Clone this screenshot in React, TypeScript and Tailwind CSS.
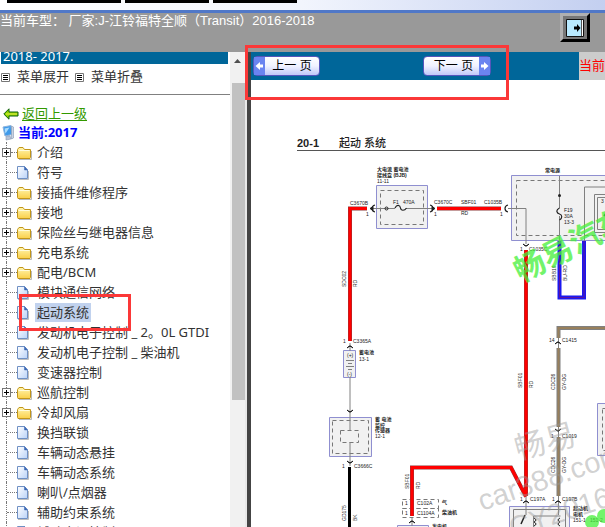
import React from 'react';

type Kind = 'folder' | 'page';
type Entry = { label: string; kind: Kind; selected?: boolean };

const entries: Entry[] = [
  { label: '介绍', kind: 'folder' },
  { label: '符号', kind: 'page' },
  { label: '接插件维修程序', kind: 'folder' },
  { label: '接地', kind: 'folder' },
  { label: '保险丝与继电器信息', kind: 'folder' },
  { label: '充电系统', kind: 'folder' },
  { label: '配电/BCM', kind: 'folder' },
  { label: '模块通信网络', kind: 'page' },
  { label: '起动系统', kind: 'page', selected: true },
  { label: '发动机电子控制 _ 2。0L GTDI', kind: 'page' },
  { label: '发动机电子控制 _ 柴油机', kind: 'page' },
  { label: '变速器控制', kind: 'page' },
  { label: '巡航控制', kind: 'folder' },
  { label: '冷却风扇', kind: 'folder' },
  { label: '换挡联锁', kind: 'page' },
  { label: '车辆动态悬挂', kind: 'page' },
  { label: '车辆动态系统', kind: 'page' },
  { label: '喇叭/点烟器', kind: 'page' },
  { label: '辅助约束系统', kind: 'page' },
  { label: '辅助空调控制', kind: 'page' },
];

function FolderIcon() {
  return (
    <svg width="16" height="16" viewBox="0 0 16 16" aria-hidden="true">
      <defs>
        <linearGradient id="folder" x1="0" y1="0" x2="0" y2="1">
          <stop offset="0" stopColor="#fff6b0" />
          <stop offset="1" stopColor="#fbd04a" />
        </linearGradient>
      </defs>
      <path d="M2 14.500h12.500V6" fill="none" stroke="#b9b9b9" />
      <path d="M.5 12.500v-8l1.500-2h4l1.500 2h6v8l-.5 1h-12z" fill="url(#folder)" stroke="#c2961a" />
      <path d="M1.500 5.500h11" stroke="#fffbdc" />
    </svg>
  );
}

function PageIcon() {
  return (
    <svg width="16" height="16" viewBox="0 0 16 16" aria-hidden="true">
      <defs>
        <linearGradient id="page" x1="0" y1="0" x2="1" y2="1">
          <stop offset="0" stopColor="#ffffff" />
          <stop offset="1" stopColor="#b9d2f8" />
        </linearGradient>
      </defs>
      <path d="M1 14.500h10.500V6" fill="none" stroke="#bdbdbd" />
      <path d="M.5 1.500h7l3 3.500v8.500H.5z" fill="url(#page)" stroke="#6f90c4" />
      <path d="M7.500 1.500V5h3z" fill="#3c68b4" stroke="#3c68b4" strokeWidth=".5" />
    </svg>
  );
}

function ListIcon() {
  return (
    <svg width="9" height="9" viewBox="0 0 9 9" aria-hidden="true">
      <path d="M.5.5h8v8h-8z" fill="#fff" stroke="#777" />
      <path d="M2 2.500h5M2 4.500h5M2 6.500h5" stroke="#000" />
    </svg>
  );
}

function BackArrow() {
  return (
    <svg width="16" height="12" viewBox="0 0 16 12" aria-hidden="true">
      <path d="M.8 6 6 .8V4h9v4H6v3.200z" fill="#8fd400" stroke="#0d5f10" />
      <path d="M3 6h11" stroke="#e9f04a" />
    </svg>
  );
}

function ComputerIcon() {
  return (
    <svg width="13" height="16" viewBox="0 0 13 16" aria-hidden="true">
      <path d="M1 2l8-1.500 1 9L3 11z" fill="#3f9aea" stroke="#8fb4dc" />
      <path d="M2.500 3.500l5-1-4 6z" fill="#a9dcff" />
      <path d="M9.500 1l2 1v11l-2 1z" fill="#c9d3e2" stroke="#8797b3" strokeWidth=".6" />
      <path d="M4 11.500l4-.7 1 3.200-5 1z" fill="#b8c3d6" stroke="#8797b3" strokeWidth=".6" />
    </svg>
  );
}

function TreeRow({ entry }: { entry: Entry }) {
  return (
    <li className="flex h-5 shrink-0 items-center">
      <div className="grid h-5 w-[17px] shrink-0 grid-cols-[6px_1fr] items-stretch">
        <span />
        <span className="flex items-center border-l border-dotted border-[#777]">
          {entry.kind === 'folder' ? (
            <button
              aria-label={'展开 ' + entry.label}
              className="-ml-[5px] flex size-[9px] shrink-0 items-center justify-center border border-[#777] bg-white"
            >
              <svg width="5" height="5" viewBox="0 0 5 5" aria-hidden="true">
                <path d="M0 2.500h5M2.500 0v5" stroke="#000" />
              </svg>
            </button>
          ) : null}
          <span className="h-px grow border-t border-dotted border-[#777]" />
        </span>
      </div>
      <span className="flex w-[18px] shrink-0 pt-px">
        {entry.kind === 'folder' ? <FolderIcon /> : <PageIcon />}
      </span>
      <a
        href="#page"
        className={
          entry.selected
            ? 'bg-[#c1d2ee] px-0.5 leading-[19px] whitespace-nowrap'
            : 'px-0.5 leading-[19px] whitespace-nowrap'
        }
      >
        {entry.label}
      </a>
    </li>
  );
}

function Sidebar() {
  return (
    <aside className="flex w-[245px] shrink-0 overflow-hidden bg-white">
      <nav className="min-w-0 flex-1 overflow-hidden font-['Noto_Sans','Noto_Sans_CJK_SC',sans-serif] text-[13px] text-[#333]">
        <div className="mr-0.5 ml-px flex h-3 items-end overflow-hidden bg-[#006699] pl-0.5 leading-4 text-white">
          2018- 2017.
        </div>
        <div className="flex h-[31px] items-center border-b border-[#808080] pb-1 pl-px">
          <button className="flex items-center gap-[7px]">
            <ListIcon />
            菜单展开
          </button>
          <button className="ml-1.5 flex items-center gap-[7px]">
            <ListIcon />
            菜单折叠
          </button>
        </div>
        <a href="#up" className="mt-[9px] flex h-5 items-center gap-[3px] pl-[3px] text-[#339900]">
          <BackArrow />
          <span className="underline underline-offset-2">返回上一级</span>
        </a>
        <div className="flex h-[18px] items-center gap-[3px] pl-0.5 font-bold text-[#0000ff]">
          <ComputerIcon />
          <span>当前:2017</span>
        </div>
        <ul>
          {entries.map((e) => (
            <TreeRow key={e.label} entry={e} />
          ))}
        </ul>
      </nav>
      <div className="flex w-[15px] shrink-0 flex-col items-end bg-[#f1f1f1]" aria-hidden="true">
        <div className="flex h-[31px] w-[15px] items-start justify-center pt-[7px]">
          <svg width="7" height="4" viewBox="0 0 7 4">
            <path d="M0 4 3.500 0 7 4z" fill="#505050" />
          </svg>
        </div>
        <div className="h-[317px] w-[13px] bg-[#c1c1c1]" />
      </div>
    </aside>
  );
}

function PageArrow({ flip }: { flip?: boolean }) {
  return (
    <svg width="11" height="18" viewBox="0 0 11 18" className="shrink-0 bg-[#6a84f0]" aria-hidden="true">
      <path
        d={flip ? 'M2 7.500h3V5l4.500 4L5 13v-2.500H2z' : 'M9 7.500H6V5L1.500 9 6 13v-2.500h3z'}
        fill="#fff"
      />
    </svg>
  );
}

const wireTexts: [number, number, string][] = [
  [377, 183, '11-11'],
  [350, 205, 'C3670B'],
  [366, 216, '1'],
  [393, 204, 'F1'],
  [403, 204, '470A'],
  [434, 204, 'C3670C'],
  [434, 216, '1'],
  [461, 204, 'SBF01'],
  [461, 215, 'RD'],
  [484, 204, 'C1035B'],
  [500, 216, '1'],
  [564, 212, 'F19'],
  [564, 218, '30A'],
  [564, 224, '13-3'],
  [601, 203, '3'],
  [520, 251, '1'],
  [529, 251, 'C1035C'],
  [343, 343, '1'],
  [353, 343, 'C3365A'],
  [359, 361, '13-1'],
  [375, 438, '12-1'],
  [342, 468, '1'],
  [354, 468, 'C3666C'],
  [405, 505, '1'],
  [417, 505, 'C102A'],
  [405, 515, '1'],
  [417, 515, 'C1104A'],
  [549, 342, '14'],
  [562, 342, 'C1415'],
  [551, 438, '1'],
  [562, 438, 'C1019'],
  [520, 501, '1'],
  [530, 501, 'C197A'],
  [552, 501, '1'],
  [562, 501, 'C197B'],
  [573, 522, '151-1'],
  [590, 522, '151-2'],
];

const boldTexts: [number, number, string][] = [
  [377, 171, '大电流 蓄电池'],
  [377, 177, '接线盒 (BJB)'],
  [545, 172, '常电源'],
  [359, 354, '蓄电池'],
  [375, 421, '蓄 电池'],
  [375, 427, '监控'],
  [375, 432, '传感器'],
  [442, 504, '气'],
  [442, 514, '柴油机'],
  [432, 528, '发电机'],
  [573, 510, '起动机'],
  [573, 516, '电机'],
];

const verticalTexts: [number, number, string][] = [
  [346, 287, 'SDC02'],
  [357, 287, 'RD'],
  [556, 281, 'SBB19'],
  [567, 281, 'BU-RD'],
  [522, 388, 'SBF01'],
  [533, 388, 'RD'],
  [555, 390, 'CDC26'],
  [566, 390, 'GY-OG'],
  [555, 473, 'CDC26'],
  [566, 473, 'GY-OG'],
  [409, 489, 'SBF01'],
  [420, 489, 'RD'],
  [346, 521, 'GD175'],
  [357, 521, 'BK'],
];

const connectorsUp: [number, number][] = [
  [350, 346],
  [412, 521],
  [526, 501],
  [558, 342],
  [558, 501],
];
const connectorsDown: [number, number][] = [
  [350, 412],
  [350, 463],
  [526, 246],
  [558, 431],
];

function Wiring() {
  return (
    <svg
      viewBox="251 151 354 376"
      className="block w-full font-['Liberation_Sans','Noto_Sans_CJK_SC',sans-serif]"
      role="img"
      aria-label="起动 系统"
    >
      <g fill="#f1f1f1" stroke="#8f8fd0">
        <path d="M376.500 185.500h51v43h-51zM511.500 175.500h110v65h-110zM343.500 350.500h12v27h-12zM329.500 417.500h42v39h-42zM597.500 403.500h20v52h-20zM509.500 506.500h60v30h-60zM397.500 525.500h31v10h-31z" />
      </g>
      <g fill="none" stroke="#777" strokeDasharray="4 3">
        <path d="M380.500 190.500h43v34h-43zM516.500 180.500h110v55h-110zM332.500 420.500h36v33h-36zM340.500 430.500h18v12h-18zM602.500 408.500h20v42h-20zM402.500 499.500h36v9h-36zM402.500 508.500h36v9h-36z" />
      </g>
      <g fill="none" stroke="#808080">
        <path d="M370 208.500h25M406 208.500h28M508 208.500h18V244M559.500 176v32M559.500 216v25M584.500 241v-54H620M594.500 194.500h20v38h-20zM597.500 197.500h20v32h-20z" />
        <path d="M350 343v8M350 377v54M350 442v24M412 518v8M526 496v19M558.500 338v10M558.500 427v10M558.500 496v19M513.500 530v-20.500h52V530M533.500 527v-11h27M346 360.500h8M348 363.500h4M346 366.500h8M348 369.500h4" />
      </g>
      <g fill="none" stroke="#222">
        <circle cx="386.500" cy="208.500" r="1.500" />
        <path d="M395 208c2-4 5-3 5.500 0s4 3 6 0M559.500 208c-4 2-3 5 0 6s3 4 0 6M375 205c-4 1-4 6 0 7M430 205c4 1 4 6 0 7M508 205c-4 1-4 6 0 7" strokeWidth="1.200" />
        <path d="M370 208.500l3-2v4zM432 206.500l3 2-3 2z" fill="#222" />
        <path d="M525 515l-4 9M604 216l4-6" strokeWidth="1.500" />
        <path d="M534 518q4 2 0 4q4 2 0 4M560 518q-4 2 0 4q-4 2 0 4" />
      </g>
      <circle cx="559.500" cy="195.500" r="1.500" fill="#222" />
      <g fill="none">
        <path d="M367 208.500H350V341M437 208.500h64M526 250v246M412 516v-48.500h99l15 29" stroke="#8c3a3a" strokeWidth="4" />
        <path d="M367 208.500H350V341M437 208.500h64M526 250v246M412 516v-48.500h99l15 29" stroke="#ff0000" strokeWidth="3" />
        <path d="M559.500 241v56.500h24.500V241" stroke="#1b18f0" strokeWidth="4" />
        <path d="M559.500 241v56.500h24.500V241" stroke="#5a14a0" strokeWidth="1" />
        <path d="M620 328H558.500v10M558.500 348v79M558.500 437v59" stroke="#808080" strokeWidth="4" />
        <path d="M620 328H558.500v10M558.500 348v79M558.500 437v59" stroke="#98805c" strokeWidth="2" />
        <path d="M349.500 467v60" stroke="#000" strokeWidth="3" />
      </g>
      <g stroke="#222" fill="#222">
        {connectorsUp.map(([x, y]) => (
          <path key={x + '-' + y} d={`M${x - 3} ${y + 2}q3-4 6 0l-3-2z`} />
        ))}
        {connectorsDown.map(([x, y]) => (
          <path key={x + '-' + y} d={`M${x - 3} ${y - 2}q3 4 6 0l-3 2z`} />
        ))}
      </g>
      <g fill="#222" fontSize="5">
        {wireTexts.map(([x, y, t]) => (
          <text key={x + '-' + y} x={x} y={y}>
            {t}
          </text>
        ))}
        <text x="347" y="357">(+)</text>
        <text x="347" y="376">(-)</text>
        <g fontWeight="bold">
          {boldTexts.map(([x, y, t]) => (
            <text key={x + '-' + y} x={x} y={y}>
              {t}
            </text>
          ))}
        </g>
        {verticalTexts.map(([x, y, t]) => (
          <text key={x + '-' + y} transform={`translate(${x} ${y}) rotate(-90)`}>
            {t}
          </text>
        ))}
      </g>
      <g fill="#45ef3a" fillOpacity=".75" fontWeight="bold">
        <text transform="translate(521 283) rotate(-27)" fontSize="31">
          畅易汽车
        </text>
        <circle cx="592" cy="522" r="7" />
        <circle cx="604" cy="516" r="7" />
      </g>
      <g fill="#999" fillOpacity=".45">
        <text transform="translate(518 460) rotate(-15)" fontSize="31">
          畅易
        </text>
        <text transform="translate(482 511) rotate(-19)" fontSize="29">
          car388.com
        </text>
        <text transform="translate(513 538) rotate(-18)" fontSize="29">
          CY2016
        </text>
      </g>
    </svg>
  );
}

function Viewer() {
  return (
    <main className="min-w-0 flex-1 overflow-hidden bg-white">
      <div className="flex h-7 items-stretch bg-[#006699] font-['Liberation_Sans','Noto_Sans_CJK_SC',sans-serif] text-[13px]">
        <div className="flex flex-1 items-center pl-0.5">
          <button className="flex h-5 w-[67px] items-center rounded-sm border border-[#5555bb] bg-linear-to-b from-white via-[#f0f2ff] to-[#c0c8f8] text-[12px] text-black">
            <PageArrow />
            <span className="flex-1 whitespace-nowrap">上一 页</span>
          </button>
          <button className="ml-[103px] flex h-5 w-[68px] items-center rounded-sm border border-[#5555bb] bg-linear-to-b from-white via-[#f0f2ff] to-[#c0c8f8] text-[12px] text-black">
            <span className="flex-1 pl-1 whitespace-nowrap">下一 页</span>
            <PageArrow flip />
          </button>
        </div>
        <div className="flex w-[26px] items-center overflow-hidden bg-[#cccccc] whitespace-nowrap text-[#ff0000]">
          当前
        </div>
      </div>
      <h1 className="mt-[55px] ml-[46px] flex h-4 items-center gap-5 border-b border-[#555] font-['Liberation_Sans','Noto_Sans_CJK_SC',sans-serif] text-[11px] leading-4 font-bold whitespace-nowrap text-[#222]">
        <span>20-1</span>
        <span className="font-medium">起动 系统</span>
      </h1>
      <Wiring />
    </main>
  );
}

export default function App() {
  return (
    <div className="relative flex h-screen flex-col overflow-hidden bg-white">
      <div className="flex h-[13px] shrink-0 items-start gap-1 border-b-3 border-[#5078c8] bg-linear-to-r from-white via-[#f2f5fd] to-[#c3cff0] pl-[7px]">
        <span className="h-[3px] w-[114px] bg-black" />
        <span className="h-[3px] w-[84px] bg-black" />
        <span className="h-[3px] w-[84px] bg-black" />
      </div>
      <header className="flex h-[39px] shrink-0 items-start justify-between bg-[#999999] pr-[15px] font-['Liberation_Sans','Noto_Sans_CJK_SC',sans-serif] text-[13px] leading-4 whitespace-nowrap text-white">
        <p>当前车型： 厂家:J-江铃福特全顺（Transit）2016-2018</p>
        <button
          aria-label="退出"
          className="flex h-[29px] w-[30px] items-center justify-center border-3 border-t-[#b0b0b0] border-r-black border-b-black border-l-[#b0b0b0] bg-[#777]"
        >
          <svg width="18" height="18" viewBox="0 0 18 18" aria-hidden="true">
            <path d="M.5.5h17v17H.5z" fill="#b9eaff" stroke="#111" />
            <path d="M16.500 1v16" stroke="#fff" />
            <path d="M15.500 1v16" stroke="#555" />
            <path d="M8 7.500h3V5l3.500 4L11 13v-2.500H8z" fill="#000" />
          </svg>
        </button>
      </header>
      <div className="flex min-h-0 flex-1">
        <Sidebar />
        <div className="w-1.5 shrink-0 border-r-4 border-l-2 border-r-[#444] border-l-[#e8e8e8]" />
        <Viewer />
      </div>
      <div className="pointer-events-none absolute top-[45px] left-[245px] h-[55px] w-[264px] border-3 border-[#fb3838]" />
      <div className="pointer-events-none absolute top-[294px] left-[19px] h-[37px] w-[112px] border-3 border-[#fb3838]" />
    </div>
  );
}
